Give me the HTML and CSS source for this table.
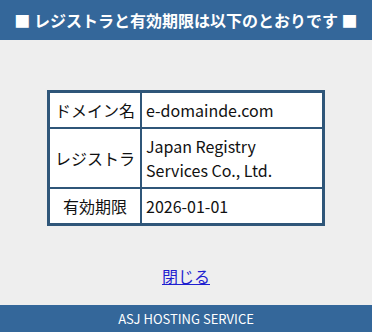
FILE: index.html
```html
<!DOCTYPE html>
<html lang="ja">
<head>
<meta charset="utf-8">
<link rel="stylesheet" href="styles.css">
</head>
<body>
<div class="page">
  <header class="head">■ レジストラと有効期限は以下のとおりです ■</header>
  <main class="main">
    <table class="info">
      <tr><th>ドメイン名</th><td>e-domainde.com</td></tr>
      <tr><th>レジストラ</th><td>Japan Registry<br>Services Co., Ltd.</td></tr>
      <tr><th>有効期限</th><td>2026-01-01</td></tr>
    </table>
    <a class="close" href="#">閉じる</a>
  </main>
  <footer class="foot">ASJ HOSTING SERVICE</footer>
</div>
</body>
</html>
```
FILE: styles.css
```css
html, body {
  margin: 0;
  padding: 0;
  background: #eeeeee;
  font-family: "Noto Sans CJK JP", "Noto Sans", sans-serif;
}
.page {
  display: flex;
  flex-direction: column;
  height: 332px;
}
.head {
  background: #34679a;
  color: #ffffff;
  font-weight: bold;
  font-size: 16px;
  height: 40px;
  line-height: 40px;
  text-align: center;
}
.main {
  flex: 1;
  display: flex;
  flex-direction: column;
  align-items: center;
  padding-top: 50px;
}
.info {
  width: 278px;
  border: 2px solid #2f5679;
  border-collapse: separate;
  border-spacing: 0;
  background: #ffffff;
  font-size: 16px;
  line-height: 24px;
  color: #111111;
}
.info th, .info td {
  border: 1px solid #2f5679;
  padding: 5px 4px;
  font-weight: normal;
}
.info th {
  width: 82px;
  text-align: center;
}
.info td {
  text-align: left;
}
.close {
  margin-top: 38px;
  font-size: 16px;
  color: #1f1fd0;
}
.foot {
  background: #34679a;
  color: #ffffff;
  font-size: 13px;
  height: 27px;
  line-height: 27px;
  text-align: center;
}
```
